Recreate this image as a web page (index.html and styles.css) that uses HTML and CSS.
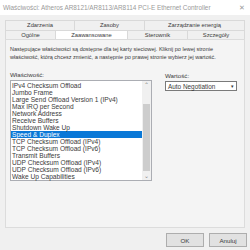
FILE: index.html
```html
<!DOCTYPE html>
<html lang="pl">
<head>
  <meta charset="UTF-8" />
  <title>Właściwości</title>
  <link rel="stylesheet" href="styles.css">
</head>
<body>
  <div class="window">
    <div class="titlebar">
      <span class="title">Właściwości: Atheros AR8121/AR8113/AR8114 PCI-E Ethernet Controller</span>
      <span class="close">✕</span>
    </div>

    <div class="tabs">
      <div class="tab-row">
        <div class="tab w-zd">Zdarzenia</div>
        <div class="tab w-za">Zasoby</div>
        <div class="tab w-en">Zarządzanie energią</div>
      </div>
      <div class="tab-row">
        <div class="tab w-og">Ogólne</div>
        <div class="tab w-adv active">Zaawansowane</div>
        <div class="tab w-st">Sterownik</div>
        <div class="tab w-sz">Szczegóły</div>
      </div>
    </div>

    <section class="page">
      <p class="desc">Następujące właściwości są dostępne dla tej karty sieciowej. Kliknij po lewej stronie<br>właściwość, którą chcesz zmienić, a następnie po prawej stronie wybierz jej wartość.</p>

      <div class="fields">
        <div class="prop">
          <label>Właściwość:</label>
          <div class="listbox">
            <ul class="items">
              <li>IPv4 Checksum Offload</li>
              <li>Jumbo Frame</li>
              <li>Large Send Offload Version 1 (IPv4)</li>
              <li>Max IRQ per Second</li>
              <li>Network Address</li>
              <li>Receive Buffers</li>
              <li>Shutdown Wake Up</li>
              <li class="selected">Speed &amp; Duplex</li>
              <li>TCP Checksum Offload (IPv4)</li>
              <li>TCP Checksum Offload (IPv6)</li>
              <li>Transmit Buffers</li>
              <li>UDP Checksum Offload (IPv4)</li>
              <li>UDP Checksum Offload (IPv6)</li>
              <li>Wake Up Capabilities</li>
            </ul>
            <div class="scrollbar">
              <span class="arrow">&#8963;</span>
              <div class="track"><div class="thumb"></div></div>
              <span class="arrow">&#8964;</span>
            </div>
          </div>
        </div>

        <div class="value">
          <label>Wartość:</label>
          <div class="select">
            <span>Auto Negotiation</span>
            <span class="caret">▾</span>
          </div>
        </div>
      </div>
    </section>

    <div class="buttons">
      <button>OK</button>
      <button>Anuluj</button>
    </div>
  </div>
</body>
</html>
```

FILE: styles.css
```css
* {
  margin: 0;
  padding: 0;
  box-sizing: border-box;
}
body {
  font-family: 'Liberation Sans', Arial, sans-serif;
  font-size: 6.2px;
  color: #3a3a3a;
  background: #f0f0f0;
}
.window {
  width: 250px;
  height: 250px;
  display: flex;
  flex-direction: column;
  background: #f0f0f0;
}
.titlebar {
  height: 15px;
  background: #fff;
  display: flex;
  align-items: center;
  justify-content: space-between;
  padding: 0 5px 0 3px;
  color: #9a9a9a;
  font-size: 6.4px;
}
.close {
  font-size: 7px;
  color: #999;
}
.tabs {
  margin: 5px 5px 0;
}
.tab-row {
  display: flex;
  height: 9.5px;
}
.tab {
  border: 1px solid #d9d9d9;
  border-bottom: none;
  margin-left: -1px;
  display: flex;
  align-items: center;
  justify-content: center;
  background: #f0f0f0;
  font-size: 5.8px;
}
.tab:first-child {
  margin-left: 0;
}
.tab.active {
  background: #fff;
}
.w-zd { width: 70px; }
.w-za { width: 71px; }
.w-en { flex: 1; }
.w-og { width: 51px; }
.w-adv { width: 73px; }
.w-st { width: 61px; }
.w-sz { flex: 1; }
.page {
  margin: 0 5px;
  height: 189px;
  border: 1px solid #dcdcdc;
  background: #f4f4f4;
  padding: 5px 4px 0;
}
.desc {
  font-size: 5.5px;
  line-height: 8px;
  white-space: nowrap;
}
.fields {
  display: flex;
  margin-top: 10px;
}
label {
  display: block;
  line-height: 7px;
  margin-bottom: 2px;
}
.prop {
  width: 142px;
}
.listbox {
  display: flex;
  height: 101px;
  border: 1px solid #abadb3;
  background: #fff;
}
.items {
  list-style: none;
  flex: 1;
  padding-top: 1px;
}
.items li {
  height: 7px;
  line-height: 7px;
  padding-left: 1px;
  white-space: nowrap;
  font-size: 6.6px;
}
.items li.selected {
  background: #0a78d7;
  color: #fff;
}
.scrollbar {
  width: 9px;
  display: flex;
  flex-direction: column;
  background: #f0f0f0;
}
.arrow {
  height: 8px;
  text-align: center;
  font-size: 6px;
  line-height: 8px;
  color: #888;
}
.track {
  flex: 1;
  display: flex;
  flex-direction: column;
  justify-content: flex-end;
  padding: 0 1px 1px;
}
.thumb {
  height: 67px;
  background: #cdcdcd;
}
.value {
  margin-left: 13px;
  margin-top: 1px;
}
.select {
  width: 72px;
  height: 10px;
  border: 1px solid #7a7a7a;
  background: #fff;
  display: flex;
  align-items: center;
  justify-content: space-between;
  padding: 0 2px;
  font-size: 6.4px;
}
.caret {
  font-size: 5px;
  color: #333;
}
.buttons {
  display: flex;
  justify-content: flex-end;
  gap: 5px;
  padding: 5px 3px 0;
}
button {
  width: 38px;
  height: 14px;
  font-family: 'Liberation Sans', Arial, sans-serif;
  font-size: 6.2px;
  color: #3a3a3a;
  background: #e1e1e1;
  border: 1px solid #adadad;
}
```
